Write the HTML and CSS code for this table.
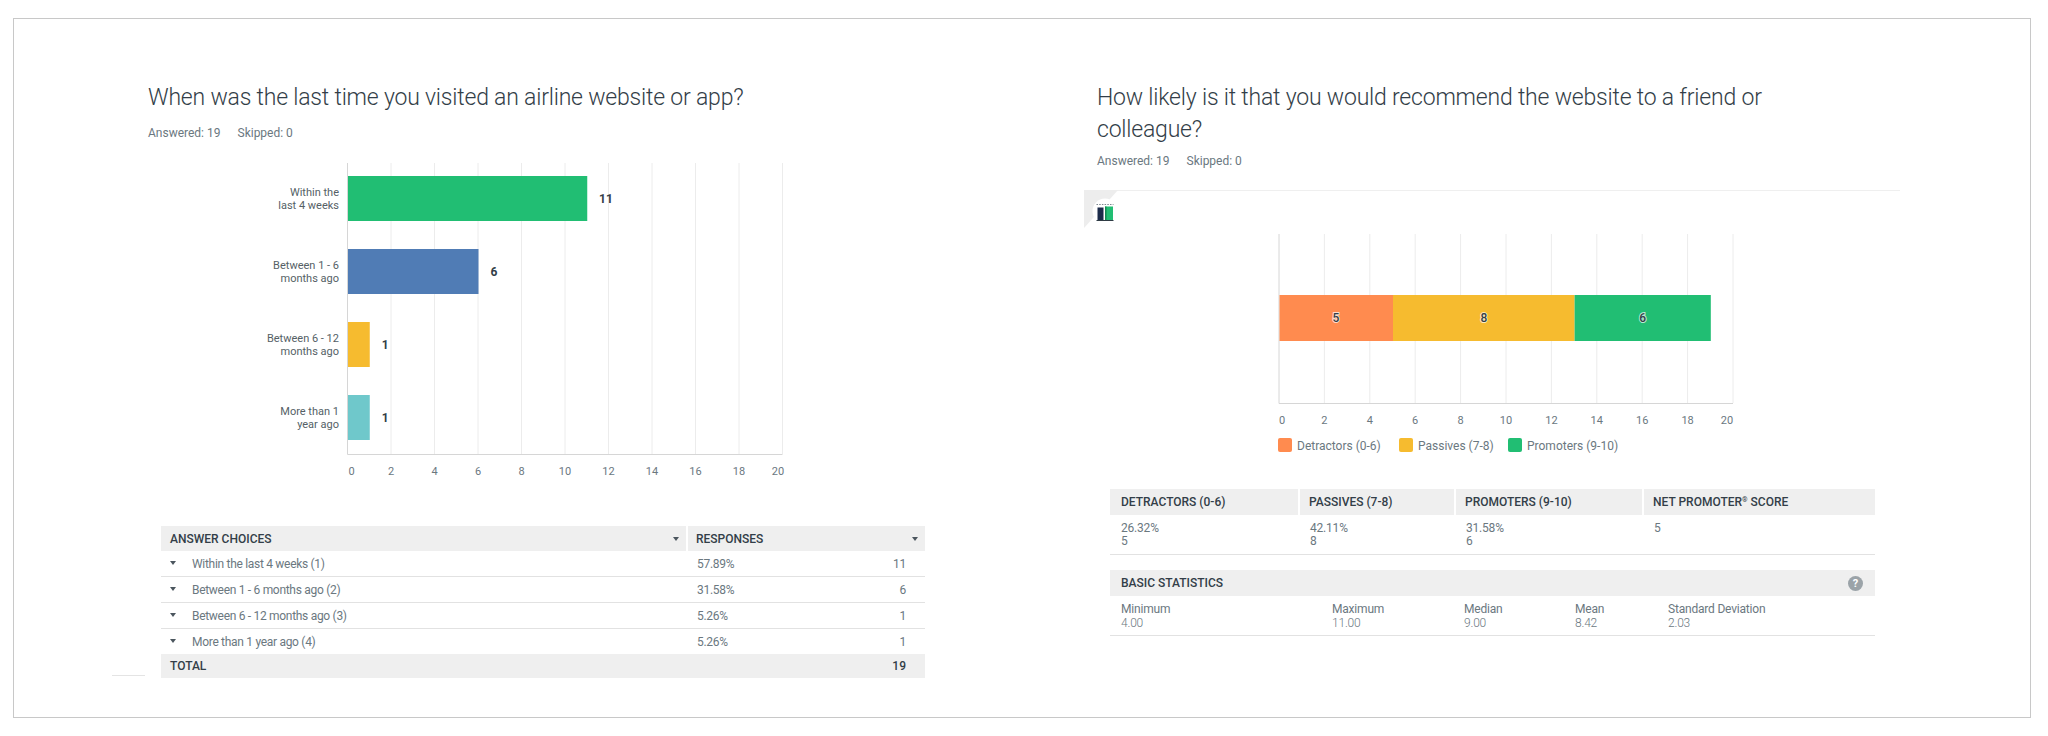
FILE: index.html
```html
<!DOCTYPE html>
<html lang="en">
<head>
<meta charset="utf-8">
<title>Survey results</title>
<link rel="stylesheet" href="styles.css">
</head>
<body>
<div class="frame">
  <section class="panel panel-left">
    <h2 class="q-title">When was the last time you visited an airline website or app?</h2>
    <div class="meta"><span>Answered: 19</span><span>Skipped: 0</span></div>
    <svg class="chart chart-left" width="660" height="330" viewBox="0 0 660 330">
      <g class="grid">
        <line x1="243" y1="8" x2="243" y2="299"/>
        <line x1="286.5" y1="8" x2="286.5" y2="299"/>
        <line x1="330" y1="8" x2="330" y2="299"/>
        <line x1="373.5" y1="8" x2="373.5" y2="299"/>
        <line x1="417" y1="8" x2="417" y2="299"/>
        <line x1="460.5" y1="8" x2="460.5" y2="299"/>
        <line x1="504" y1="8" x2="504" y2="299"/>
        <line x1="547.5" y1="8" x2="547.5" y2="299"/>
        <line x1="591" y1="8" x2="591" y2="299"/>
        <line x1="634.5" y1="8" x2="634.5" y2="299"/>
      </g>
      <g class="axis">
        <line x1="199.5" y1="8" x2="199.5" y2="299.5"/>
        <line x1="199.5" y1="299.5" x2="634.5" y2="299.5"/>
      </g>
      <rect x="200" y="21" width="239.25" height="45" fill="#21be73"/>
      <rect x="200" y="94" width="130.5" height="45" fill="#507cb5"/>
      <rect x="200" y="167" width="21.75" height="45" fill="#f6bb2f"/>
      <rect x="200" y="240" width="21.75" height="45" fill="#6fc8cb"/>
      <g class="val">
        <text x="451" y="43.5">11</text>
        <text x="342.5" y="116.5">6</text>
        <text x="233.75" y="189.5">1</text>
        <text x="233.75" y="262.5">1</text>
      </g>
      <g class="cat">
        <text x="191" y="37">Within the</text>
        <text x="191" y="50">last 4 weeks</text>
        <text x="191" y="110">Between 1 - 6</text>
        <text x="191" y="123">months ago</text>
        <text x="191" y="183">Between 6 - 12</text>
        <text x="191" y="196">months ago</text>
        <text x="191" y="256">More than 1</text>
        <text x="191" y="269">year ago</text>
      </g>
      <g class="tick">
        <text x="203.5" y="316">0</text>
        <text x="243" y="316">2</text>
        <text x="286.5" y="316">4</text>
        <text x="330" y="316">6</text>
        <text x="373.5" y="316">8</text>
        <text x="417" y="316">10</text>
        <text x="460.5" y="316">12</text>
        <text x="504" y="316">14</text>
        <text x="547.5" y="316">16</text>
        <text x="591" y="316">18</text>
        <text x="630" y="316">20</text>
      </g>
    </svg>
    <div class="table-wrap">
      <table class="answers">
        <colgroup><col class="c-choice"><col class="c-pct"><col class="c-count"></colgroup>
        <thead>
          <tr>
            <th><div class="th-inner">Answer Choices<span class="sort"></span></div></th>
            <th colspan="2" class="sep"><div class="th-inner">Responses<span class="sort"></span></div></th>
          </tr>
        </thead>
        <tbody>
          <tr><td><span class="caret"></span>Within the last 4 weeks (1)</td><td class="pct">57.89%</td><td class="num">11</td></tr>
          <tr><td><span class="caret"></span>Between 1 - 6 months ago (2)</td><td class="pct">31.58%</td><td class="num">6</td></tr>
          <tr><td><span class="caret"></span>Between 6 - 12 months ago (3)</td><td class="pct">5.26%</td><td class="num">1</td></tr>
          <tr><td><span class="caret"></span>More than 1 year ago (4)</td><td class="pct">5.26%</td><td class="num">1</td></tr>
        </tbody>
        <tfoot>
          <tr><td>Total</td><td></td><td class="num">19</td></tr>
        </tfoot>
      </table>
    </div>
  </section>

  <section class="panel panel-right">
    <h2 class="q-title q-title-right">How likely is it that you would recommend the website to a friend or colleague?</h2>
    <div class="meta meta-right"><span>Answered: 19</span><span>Skipped: 0</span></div>
    <div class="chart-box">
      <svg class="corner" width="40" height="42" viewBox="0 0 40 42">
        <polygon points="0,0 34,0 0,38" fill="#ededed"/>
        <circle cx="21" cy="21" r="12.5" fill="#ffffff"/>
        <line x1="12.5" y1="14.5" x2="29.5" y2="14.5" stroke="#7d878e" stroke-width="1" stroke-dasharray="1.5 1.2"/>
        <rect x="13.5" y="17.5" width="6" height="13" fill="#1c2b4a"/>
        <rect x="21" y="16.5" width="8" height="14" fill="#21be73"/>
        <rect x="21" y="16.5" width="1.5" height="14" fill="#128a52"/>
        <line x1="12.5" y1="30.5" x2="29.5" y2="30.5" stroke="#2f3b44" stroke-width="1"/>
      </svg>
      <svg class="chart chart-right" width="816" height="270" viewBox="0 0 816 270">
        <g class="grid">
          <line x1="240.4" y1="43" x2="240.4" y2="212"/>
          <line x1="285.8" y1="43" x2="285.8" y2="212"/>
          <line x1="331.2" y1="43" x2="331.2" y2="212"/>
          <line x1="376.6" y1="43" x2="376.6" y2="212"/>
          <line x1="422" y1="43" x2="422" y2="212"/>
          <line x1="467.4" y1="43" x2="467.4" y2="212"/>
          <line x1="512.8" y1="43" x2="512.8" y2="212"/>
          <line x1="558.2" y1="43" x2="558.2" y2="212"/>
          <line x1="603.6" y1="43" x2="603.6" y2="212"/>
          <line x1="649" y1="43" x2="649" y2="212"/>
        </g>
        <g class="axis">
          <line x1="195" y1="43" x2="195" y2="212.5"/>
          <line x1="195" y1="212.5" x2="649" y2="212.5"/>
        </g>
        <rect x="195.5" y="104" width="113.5" height="46" fill="#ff8b4f"/>
        <rect x="309" y="104" width="181.6" height="46" fill="#f6bb2f"/>
        <rect x="490.6" y="104" width="136.2" height="46" fill="#21be73"/>
        <g class="seg">
          <text x="252" y="127">5</text>
          <text x="399.8" y="127">8</text>
          <text x="558.7" y="127">6</text>
        </g>
        <g class="tick">
          <text x="198" y="229">0</text>
          <text x="240.4" y="229">2</text>
          <text x="285.8" y="229">4</text>
          <text x="331.2" y="229">6</text>
          <text x="376.6" y="229">8</text>
          <text x="422" y="229">10</text>
          <text x="467.4" y="229">12</text>
          <text x="512.8" y="229">14</text>
          <text x="558.2" y="229">16</text>
          <text x="603.6" y="229">18</text>
          <text x="643" y="229">20</text>
        </g>
        <g class="legend">
          <rect x="194" y="247" width="14" height="14" rx="2" fill="#ff8b4f"/>
          <text x="213" y="254.5">Detractors (0-6)</text>
          <rect x="315" y="247" width="14" height="14" rx="2" fill="#f6bb2f"/>
          <text x="334" y="254.5">Passives (7-8)</text>
          <rect x="424" y="247" width="14" height="14" rx="2" fill="#21be73"/>
          <text x="443" y="254.5">Promoters (9-10)</text>
        </g>
      </svg>
    </div>

    <table class="nps">
      <colgroup><col class="n1"><col class="n2"><col class="n3"><col class="n4"></colgroup>
      <thead>
        <tr><th>Detractors (0-6)</th><th>Passives (7-8)</th><th>Promoters (9-10)</th><th>Net Promoter<sup>®</sup> Score</th></tr>
      </thead>
      <tbody>
        <tr>
          <td>26.32%<br>5</td>
          <td>42.11%<br>8</td>
          <td>31.58%<br>6</td>
          <td>5</td>
        </tr>
      </tbody>
    </table>

    <table class="stats">
      <colgroup><col class="s1"><col class="s2"><col class="s3"><col class="s4"><col class="s5"></colgroup>
      <thead>
        <tr><th colspan="5"><div class="th-inner">Basic Statistics<span class="help">?</span></div></th></tr>
      </thead>
      <tbody>
        <tr>
          <td>Minimum<br><span class="v">4.00</span></td>
          <td>Maximum<br><span class="v">11.00</span></td>
          <td>Median<br><span class="v">9.00</span></td>
          <td>Mean<br><span class="v">8.42</span></td>
          <td>Standard Deviation<br><span class="v">2.03</span></td>
        </tr>
      </tbody>
    </table>
  </section>
</div>
</body>
</html>
```

FILE: styles.css
```css
html, body {
  margin: 0;
  padding: 0;
  background: #ffffff;
}

body {
  font-family: Roboto, "Liberation Sans", Arial, sans-serif;
  color: #333e48;
}

.frame {
  box-sizing: border-box;
  width: 2018px;
  height: 700px;
  margin: 18px 0 0 13px;
  border: 1px solid #c8c8c8;
  display: flex;
  align-items: flex-start;
  padding-top: 63px;
}

.panel-left {
  margin-left: 134px;
  width: 800px;
  flex: none;
}

.panel-right {
  margin-left: 136px;
  width: 816px;
  flex: none;
}

.q-title {
  margin: 0;
  font-size: 23px;
  line-height: 32px;
  font-weight: 300;
  color: #333e48;
  letter-spacing: -0.2px;
}

.q-title-right {
  padding-left: 13px;
  width: 740px;
}

.meta {
  margin-top: 11px;
  font-size: 12px;
  line-height: 16px;
  color: #6b787f;
  display: flex;
  gap: 17px;
}

.meta-right {
  margin-top: 7px;
  padding-left: 13px;
}

.chart {
  display: block;
  font-family: Roboto, "Liberation Sans", Arial, sans-serif;
}

.chart-left {
  margin-top: 14px;
}

.grid line {
  stroke: #ececec;
  stroke-width: 1;
}

.axis line {
  stroke: #d6d6d6;
  stroke-width: 1;
}

.val text {
  font-size: 12px;
  font-weight: 700;
  fill: #333e48;
  dominant-baseline: central;
}

.cat text {
  font-size: 11px;
  fill: #555f66;
  text-anchor: end;
  dominant-baseline: central;
}

.tick text {
  font-size: 11px;
  fill: #6b787f;
  text-anchor: middle;
  dominant-baseline: central;
}

.seg text {
  font-size: 12px;
  font-weight: 500;
  fill: #333e48;
  text-anchor: middle;
  dominant-baseline: central;
  stroke: #ffffff;
  stroke-width: 2px;
  stroke-opacity: 0.7;
  paint-order: stroke;
}

.legend text {
  font-size: 12px;
  fill: #6b787f;
  dominant-baseline: central;
}

/* left table */
.table-wrap {
  position: relative;
  margin-top: 41px;
  margin-left: 13px;
  width: 764px;
}

.table-wrap::before {
  content: "";
  position: absolute;
  left: -49px;
  bottom: 2px;
  width: 33px;
  height: 1px;
  background: #e4e4e4;
}

table {
  border-collapse: collapse;
  width: 100%;
  font-size: 12px;
}

.answers {
  table-layout: fixed;
}

.c-choice { width: 526px; }
.c-pct { width: 140px; }

th {
  text-align: left;
  font-weight: 500;
  text-transform: uppercase;
  color: #333e48;
  background: #efefef;
  padding: 0;
}

.answers thead th {
  height: 25px;
  padding: 0 7px 0 9px;
}

.answers thead th.sep {
  border-left: 2px solid #ffffff;
  padding-left: 8px;
}

.th-inner {
  display: flex;
  align-items: center;
  justify-content: space-between;
}

.sort {
  display: inline-block;
  width: 0;
  height: 0;
  border-left: 3.5px solid transparent;
  border-right: 3.5px solid transparent;
  border-top: 4px solid #4b565e;
}

.answers tbody td {
  height: 25px;
  padding: 0;
  color: #6b787f;
  letter-spacing: -0.3px;
  border-bottom: 1px solid #e2e2e2;
}

.answers tbody tr:last-child td {
  border-bottom: none;
}

.answers tbody td:first-child {
  padding-left: 9px;
}

.caret {
  display: inline-block;
  width: 0;
  height: 0;
  border-left: 3.5px solid transparent;
  border-right: 3.5px solid transparent;
  border-top: 4px solid #4b565e;
  margin-right: 16px;
  vertical-align: middle;
  position: relative;
  top: -1px;
}

.answers td.pct {
  padding-left: 10px;
}

.answers td.num {
  text-align: right;
  padding-right: 19px;
}

.answers tfoot td {
  height: 24px;
  padding: 0;
  background: #efefef;
  font-weight: 500;
  text-transform: uppercase;
  color: #333e48;
}

.answers tfoot td:first-child {
  padding-left: 9px;
}

.answers tfoot td.num {
  padding-right: 19px;
}

/* right panel */
.chart-box {
  position: relative;
  margin-top: 21px;
  border-top: 1px solid #efefef;
}

.corner {
  position: absolute;
  left: 0;
  top: -1px;
  display: block;
}

.nps, .stats {
  margin-left: 26px;
  width: 765px;
  table-layout: fixed;
}

.nps {
  margin-top: 28px;
}

.n1 { width: 189px; }
.n2 { width: 156px; }
.n3 { width: 188px; }

.nps th {
  height: 26px;
  padding: 0 0 0 11px;
}

.nps th + th {
  border-left: 2px solid #ffffff;
  padding-left: 9px;
}

.nps sup {
  font-size: 7px;
  vertical-align: 4px;
  line-height: 0;
}

.nps td {
  vertical-align: top;
  padding: 7px 0 6px 11px;
  line-height: 13px;
  color: #6b787f;
  letter-spacing: -0.2px;
  border-bottom: 1px solid #e2e2e2;
}

.nps td + td {
  padding-left: 11px;
}

.stats {
  margin-top: 15px;
}

.s1 { width: 211px; }
.s2 { width: 132px; }
.s3 { width: 111px; }
.s4 { width: 93px; }

.stats th {
  height: 26px;
  padding: 0 12px 0 11px;
}

.help {
  display: inline-flex;
  align-items: center;
  justify-content: center;
  width: 15px;
  height: 15px;
  border-radius: 50%;
  background: #9ba3a8;
  color: #ffffff;
  font-size: 11px;
  font-weight: 700;
}

.stats td {
  vertical-align: top;
  padding: 6px 0 5px 11px;
  line-height: 14px;
  color: #6b787f;
  letter-spacing: -0.2px;
  border-bottom: 1px solid #e2e2e2;
}

.stats .v {
  font-weight: 300;
}
```
